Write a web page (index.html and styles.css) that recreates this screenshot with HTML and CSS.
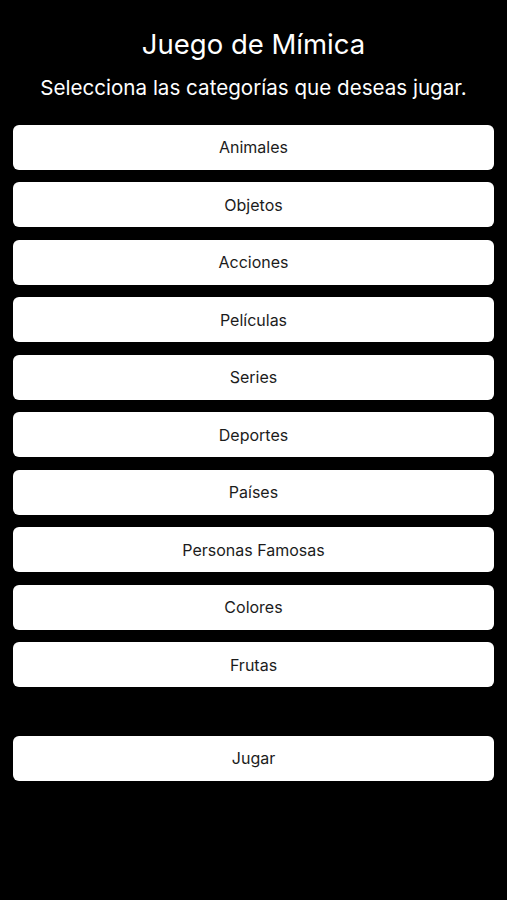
FILE: index.html
```html
<!DOCTYPE html>
<html lang="es">
<head>
    <meta charset="UTF-8">
    <meta name="viewport" content="width=device-width, initial-scale=1.0">
    <title>Juego de Mímica</title>
    <link rel="stylesheet" href="styles.css">
</head>
<body>
    <main class="screen">
        <h1 class="title">Juego de Mímica</h1>
        <p class="subtitle">Selecciona las categorías que deseas jugar.</p>
        <div class="category-list">
            <button class="category-btn">Animales</button>
            <button class="category-btn">Objetos</button>
            <button class="category-btn">Acciones</button>
            <button class="category-btn">Películas</button>
            <button class="category-btn">Series</button>
            <button class="category-btn">Deportes</button>
            <button class="category-btn">Países</button>
            <button class="category-btn">Personas Famosas</button>
            <button class="category-btn">Colores</button>
            <button class="category-btn">Frutas</button>
        </div>
        <button class="category-btn play-btn">Jugar</button>
    </main>
</body>
</html>
```

FILE: styles.css
```css
body {
    margin: 0;
    padding: 0;
    background-color: #000;
    font-family: Inter, "Noto Sans", sans-serif;
    color: #fff;
}
.screen {
    display: flex;
    flex-direction: column;
    padding: 27px 13px 0;
}
.title {
    margin: 0;
    font-size: 27.5px;
    line-height: 34px;
    font-weight: 400;
    text-align: center;
}
.subtitle {
    margin: 15px 0 24.5px;
    font-size: 20.6px;
    line-height: 24px;
    text-align: center;
}
.category-list {
    display: flex;
    flex-direction: column;
    gap: 12.5px;
}
.category-btn {
    height: 45px;
    background-color: #fff;
    color: #1c1c1c;
    border: none;
    border-radius: 6px;
    font-family: Inter, "Noto Sans", sans-serif;
    font-size: 16px;
    cursor: pointer;
}
.play-btn {
    margin-top: 48.5px;
}
```
